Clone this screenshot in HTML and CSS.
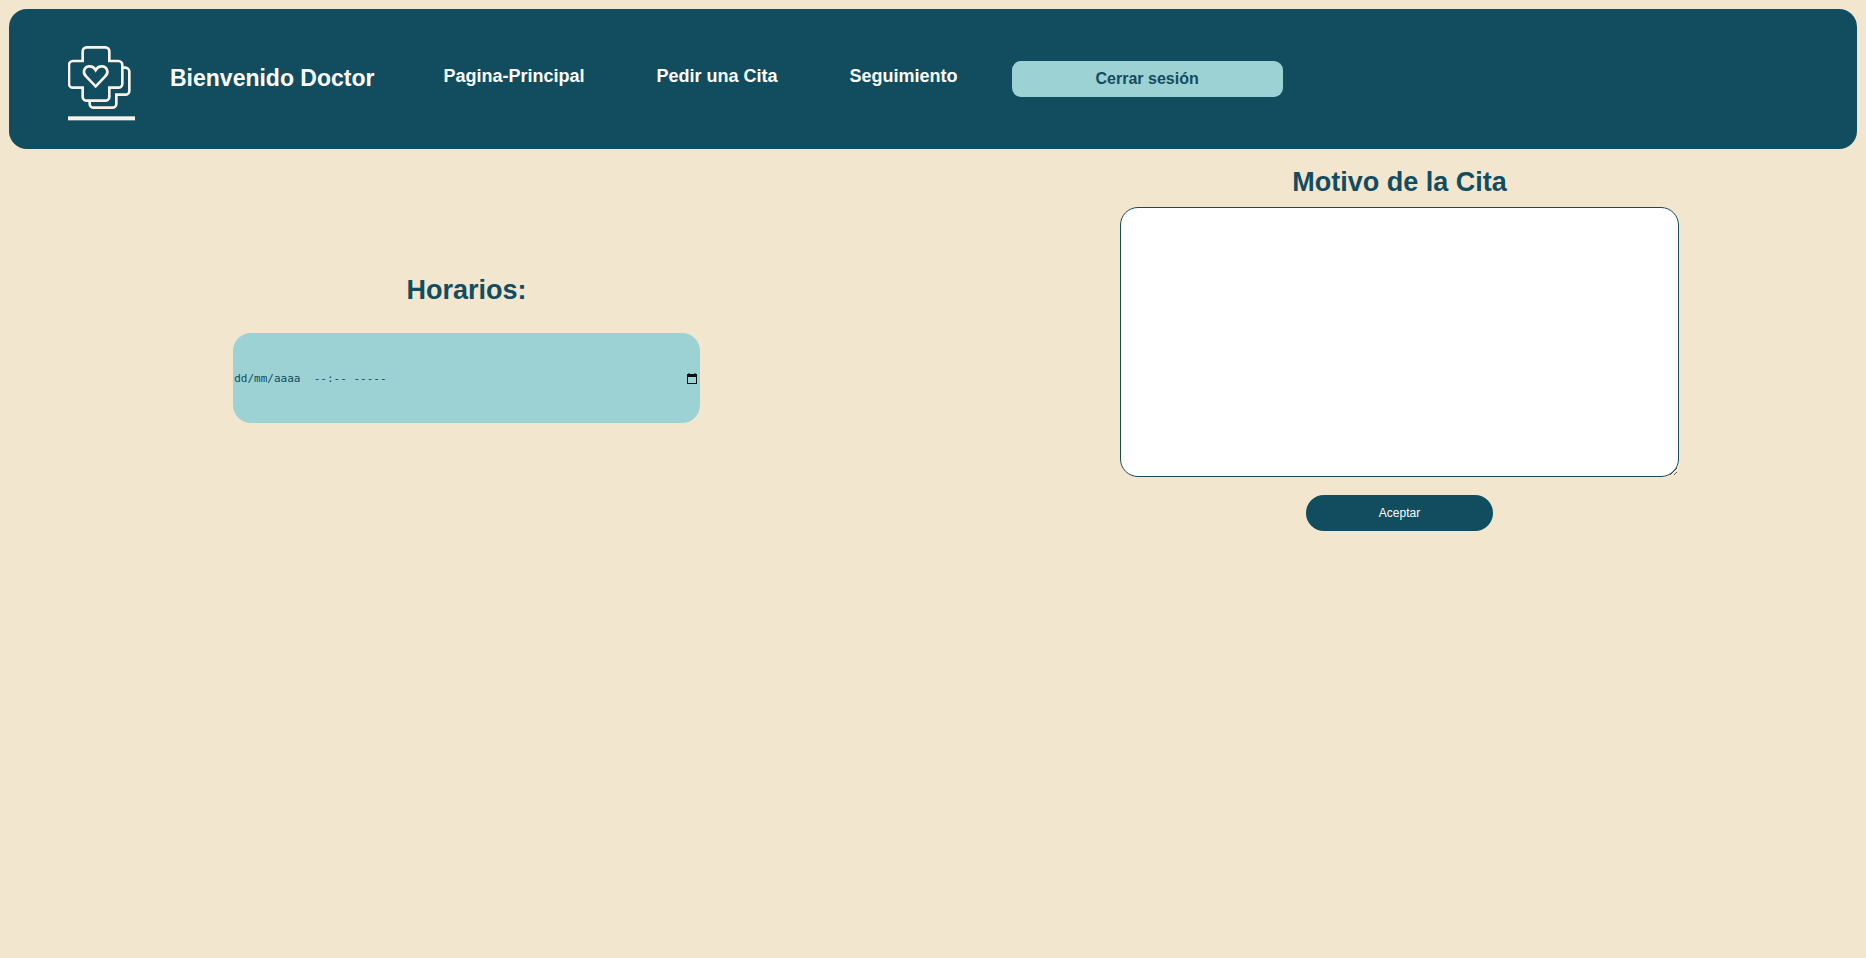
FILE: index.html
```html
<!DOCTYPE html>
<html lang="es">
<head>
  <meta charset="utf-8">
  <title>Pedir una Cita</title>
  <link rel="stylesheet" href="styles.css">
</head>
<body>
  <header class="topbar">
    <svg class="logo" viewBox="54 48 201 225" aria-hidden="true">
      <path class="logo-line" d="M98 93V64a12 12 0 0 1 12-12h56a12 12 0 0 1 12 12v29h27a12 12 0 0 1 12 12v56a12 12 0 0 1-12 12h-27v27a12 12 0 0 1-12 12h-56a12 12 0 0 1-12-12v-27H69a12 12 0 0 1-12-12v-56a12 12 0 0 1 12-12z"/>
      <path class="logo-line" d="M217 113h9a12 12 0 0 1 12 12v57a12 12 0 0 1-12 12h-27v27a12 12 0 0 1-12 12h-56a12 12 0 0 1-12-12v-9"/>
      <path class="logo-line" d="M137 169l-28-29c-6-6-8-12-7-17 3-16 25-20 35-3 10-17 32-13 35 3 1 5-1 11-7 17z"/>
      <rect class="logo-base" x="54" y="259" width="201" height="12"/>
    </svg>
    <h1 class="welcome">Bienvenido Doctor</h1>
    <nav class="menu">
      <a class="menu-link" href="#">Pagina-Principal</a>
      <a class="menu-link" href="#">Pedir una Cita</a>
      <a class="menu-link" href="#">Seguimiento</a>
    </nav>
    <button class="logout" type="button">Cerrar sesión</button>
  </header>

  <form class="booking">
    <section class="column">
      <label class="heading heading-wide" for="fecha">Horarios:</label>
      <div class="date-field">
        <input class="date-input" id="fecha" type="text" placeholder="dd/mm/aaaa&nbsp; --:-- -----">
        <button class="date-picker" type="button" aria-label="Abrir calendario">
          <svg class="calendar" viewBox="0 0 10 11" aria-hidden="true">
            <path d="M1.5 0h1v1h5V0h1v1H10v10H0V1h1.5zM1 4v6h8V4z" fill-rule="evenodd"/>
          </svg>
        </button>
      </div>
    </section>
    <section class="column">
      <label class="heading" for="motivo">Motivo de la Cita</label>
      <textarea class="reason" id="motivo"></textarea>
      <button class="accept" type="button">Aceptar</button>
    </section>
  </form>
</body>
</html>
```
FILE: styles.css
```css
* {
  box-sizing: border-box;
}

body {
  margin: 0;
  background: #f2e6cf;
  color: #114c5f;
  font-family: "Liberation Sans", Arial, sans-serif;
}

.topbar {
  display: flex;
  align-items: center;
  min-height: 140px;
  margin: 9px 9px 0;
  padding: 0 59px;
  border-radius: 18px;
  background: #114c5f;
}

.logo {
  flex: none;
  width: 67px;
  height: 75px;
  margin-top: 8px;
}

.logo-line {
  fill: none;
  stroke: #faf3ea;
  stroke-width: 8;
}

.logo-base {
  fill: #faf3ea;
}

.welcome {
  margin: 0 34px 0 35px;
  padding-bottom: 2px;
  color: #fff;
  font-size: 23px;
  line-height: 26px;
}

.menu {
  display: flex;
  gap: 72px;
  margin: 0 54px 0 35px;
}

.menu-link {
  border-bottom: 6px solid transparent;
  color: #fff;
  font-size: 18px;
  font-weight: bold;
  line-height: 20px;
  text-decoration: none;
}

.logout {
  height: 36px;
  padding: 0 84px;
  border: 0;
  border-radius: 9px;
  background: #9cd2d3;
  color: #114c5f;
  font: bold 16px "Liberation Sans", Arial, sans-serif;
}

.booking {
  display: grid;
  grid-template-columns: 1fr 1fr;
  align-items: center;
  padding-top: 18px;
}

.column {
  display: flex;
  flex-direction: column;
  align-items: center;
}

.heading {
  margin-bottom: 9px;
  font-size: 27px;
  font-weight: bold;
  line-height: 31px;
}

.heading-wide {
  margin-bottom: 27px;
}

.date-field {
  display: flex;
  align-items: center;
  width: 50%;
  height: 90px;
  padding: 0 3px 0 1px;
  border-radius: 18px;
  background: #9cd2d3;
}

.date-input {
  flex: 1;
  min-width: 0;
  height: 100%;
  padding: 0;
  border: 0;
  background: transparent;
  color: #114c5f;
  font: 11px "DejaVu Sans Mono", monospace;
}

.date-input::placeholder {
  color: #114c5f;
}

.date-picker {
  display: flex;
  padding: 0;
  border: 0;
  background: transparent;
}

.calendar {
  width: 10px;
  height: 11px;
  fill: #101010;
}

.reason {
  width: 60%;
  height: 270px;
  border: 1px solid #114c5f;
  border-radius: 18px;
  background: #fff;
}

.accept {
  width: 20%;
  height: 36px;
  margin-top: 18px;
  border: 0;
  border-radius: 18px;
  background: #114c5f;
  color: #fff;
  font: 12px "Liberation Sans", Arial, sans-serif;
}
```
